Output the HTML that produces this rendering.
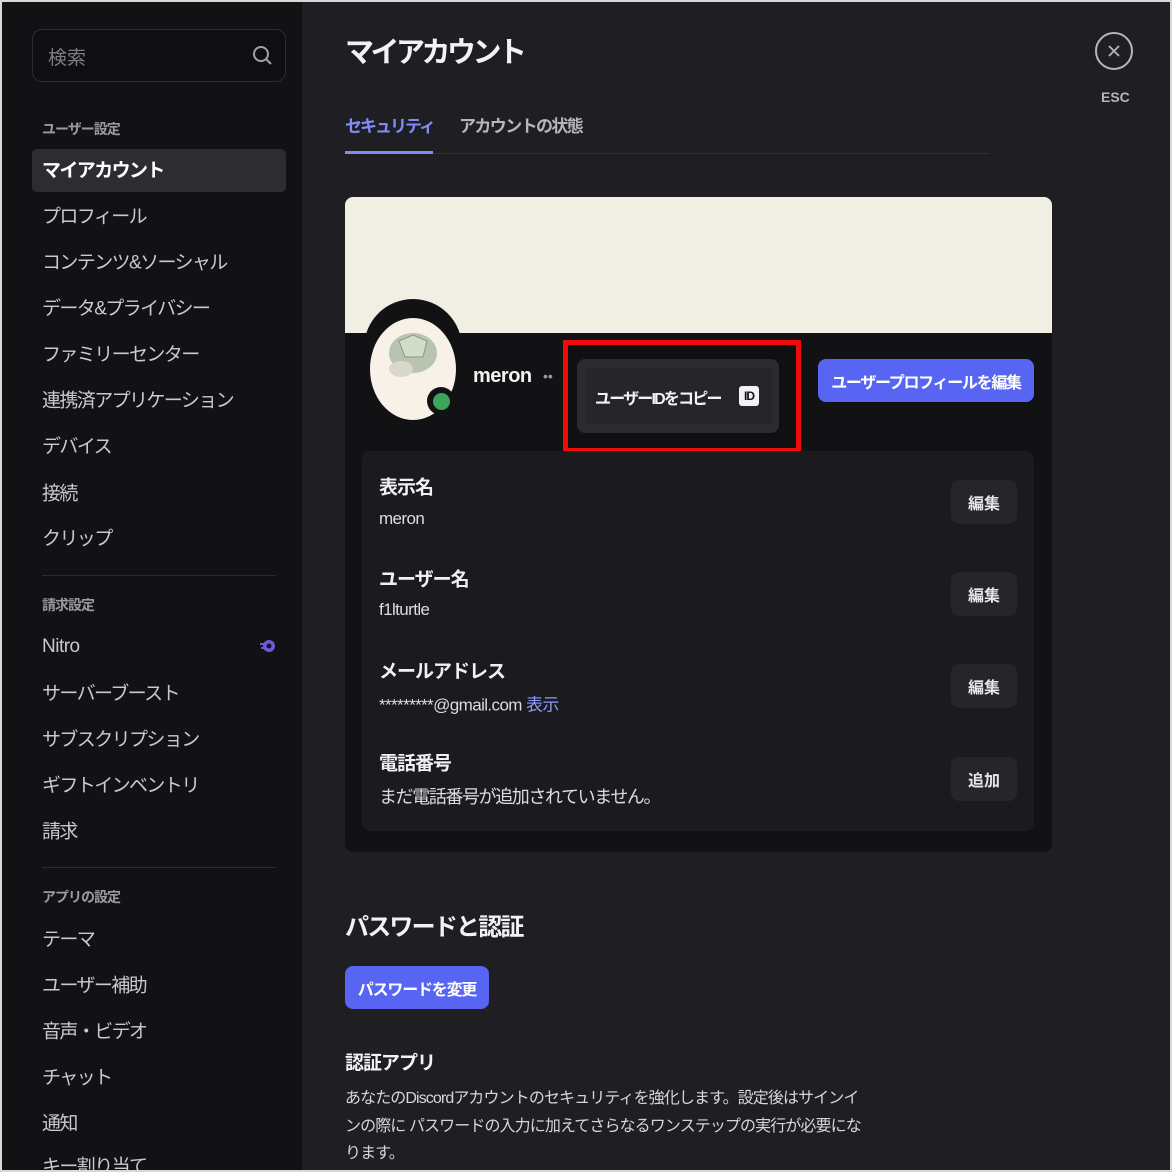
<!DOCTYPE html>
<html><head><meta charset="utf-8"><style>
*{margin:0;padding:0;box-sizing:border-box}
body{width:1172px;height:1172px;overflow:hidden;background:#d8d8d6;font-family:"Liberation Sans","Noto Sans CJK JP",sans-serif;position:relative}
.frame{position:absolute;left:2px;top:2px;width:1168px;height:1168px;background:#1f1f23;overflow:hidden}
.side{position:absolute;left:0;top:0;width:300px;height:1168px;background:#121214}
.abs{position:absolute;white-space:nowrap}
.si{position:absolute;left:40px;font-size:19px;color:#c9c9cf;transform:translateY(-50%);letter-spacing:-1.6px}
.hd{position:absolute;left:40px;font-size:14px;font-weight:bold;color:#9a9aa2;transform:translateY(-50%);letter-spacing:-1px}
.sep{position:absolute;left:40px;width:234px;height:1px;background:#2a2a30}
.lbl{position:absolute;left:377px;font-size:19px;font-weight:bold;color:#f0f0f2;transform:translateY(-50%);letter-spacing:-1px}
.val{position:absolute;left:377px;font-size:17px;color:#dcdce0;transform:translateY(-50%);letter-spacing:-0.6px}
.eb{position:absolute;left:949px;width:66px;height:44px;background:#25252a;border-radius:8px;color:#e6e6ea;font-size:16px;font-weight:bold;display:flex;align-items:center;justify-content:center}
</style></head><body><div class="frame">
<div class="side">
 <div class="abs" style="left:30px;top:27px;width:254px;height:53px;border:1px solid #2c2c32;border-radius:10px;background:#0f0f11"></div>
 <div class="abs" style="left:46px;top:41px;font-size:19px;color:#7c7c84">検索</div>
 <svg class="abs" style="left:250px;top:43px" width="22" height="22" viewBox="0 0 22 22"><circle cx="9" cy="9" r="7" fill="none" stroke="#a0a0a8" stroke-width="2"/><line x1="14" y1="14" x2="19" y2="19" stroke="#a0a0a8" stroke-width="2"/></svg>
 <div class="hd" style="top:127px">ユーザー設定</div>
 <div class="abs" style="left:30px;top:147px;width:254px;height:43px;background:#2c2c31;border-radius:5px"></div>
 <div class="si" style="top:167px;color:#fff;font-weight:bold">マイアカウント</div>
 <div class="si" style="top:213px">プロフィール</div>
 <div class="si" style="top:259px">コンテンツ&amp;ソーシャル</div>
 <div class="si" style="top:305px">データ&amp;プライバシー</div>
 <div class="si" style="top:351px">ファミリーセンター</div>
 <div class="si" style="top:397px">連携済アプリケーション</div>
 <div class="si" style="top:443px">デバイス</div>
 <div class="si" style="top:490px">接続</div>
 <div class="si" style="top:535px">クリップ</div>
 <div class="sep" style="top:573px"></div>
 <div class="hd" style="top:603px">請求設定</div>
 <div class="si" style="top:645px;letter-spacing:-0.5px">Nitro</div>
 <svg class="abs" style="left:257px;top:636px" width="18" height="16" viewBox="0 0 18 16"><circle cx="10" cy="8" r="6" fill="#6a5cd8"/><circle cx="10" cy="8" r="2.5" fill="#1a1030"/><rect x="1" y="5" width="4" height="2" fill="#6a5cd8"/><rect x="2" y="9" width="3" height="2" fill="#6a5cd8"/></svg>
 <div class="si" style="top:690px">サーバーブースト</div>
 <div class="si" style="top:736px">サブスクリプション</div>
 <div class="si" style="top:782px">ギフトインベントリ</div>
 <div class="si" style="top:828px">請求</div>
 <div class="sep" style="top:865px"></div>
 <div class="hd" style="top:895px">アプリの設定</div>
 <div class="si" style="top:936px">テーマ</div>
 <div class="si" style="top:982px">ユーザー補助</div>
 <div class="si" style="top:1028px">音声・ビデオ</div>
 <div class="si" style="top:1074px">チャット</div>
 <div class="si" style="top:1120px">通知</div>
 <div class="si" style="top:1163px">キー割り当て</div>
</div>
<div class="abs" style="left:343px;top:27px;font-size:29px;font-weight:bold;color:#f2f2f4;letter-spacing:-3.5px">マイアカウント</div>
<div class="abs" style="left:343px;top:110px;font-size:17px;font-weight:bold;color:#7f8cf5;letter-spacing:-2px">セキュリティ</div>
<div class="abs" style="left:457px;top:110px;font-size:17px;font-weight:bold;color:#b5b5bc;letter-spacing:-1.6px">アカウントの状態</div>
<div class="abs" style="left:343px;top:151px;width:645px;height:1px;background:#2e2e34"></div>
<div class="abs" style="left:343px;top:149px;width:88px;height:3px;background:#7f8cf5"></div>
<svg class="abs" style="left:1092px;top:29px" width="40" height="40" viewBox="0 0 40 40"><circle cx="20" cy="20" r="18" fill="none" stroke="#b5b5bc" stroke-width="2"/><path d="M15 15 L25 25 M25 15 L15 25" stroke="#b5b5bc" stroke-width="1.8"/></svg>
<div class="abs" style="left:1099px;top:87px;font-size:14px;font-weight:bold;color:#b5b5bc">ESC</div>

<div class="abs" style="left:343px;top:195px;width:707px;height:655px;background:#121214;border-radius:8px;overflow:hidden">
 <div style="height:136px;background:#f1eee3"></div>
</div>
<div class="abs" style="left:362px;top:297px;width:98px;height:126px;border-radius:49px;background:#121214"></div>
<div class="abs" style="left:368px;top:316px;width:86px;height:102px;border-radius:50%;background:#f7f1e8"></div>
<svg class="abs" style="left:375px;top:325px" width="70" height="60" viewBox="0 0 70 60"><ellipse cx="36" cy="26" rx="24" ry="20" fill="#b8c4b0"/><path d="M22 14 L36 8 L50 14 L46 30 L28 30Z" fill="#d3dccb" stroke="#8a9684"/><ellipse cx="24" cy="42" rx="12" ry="8" fill="#d8d8cc"/></svg>
<div class="abs" style="left:425px;top:385px;width:28px;height:28px;border-radius:50%;background:#121214"></div>
<div class="abs" style="left:431px;top:391px;width:17px;height:17px;border-radius:50%;background:#3ba55c"></div>
<div class="abs" style="left:471px;top:363px;font-size:20px;font-weight:bold;color:#f2f2f4;letter-spacing:-0.5px">meron</div>
<div class="abs" style="left:541px;top:366px;font-size:14px;color:#9a9aa2">••</div>
<div class="abs" style="left:561px;top:338px;width:238px;height:113px;border:5px solid #f00a0a;background:#101012"></div>
<div class="abs" style="left:575px;top:357px;width:202px;height:74px;border-radius:8px;background:#2a2a2f"></div>
<div class="abs" style="left:584px;top:366px;width:186px;height:56px;background:#25252a"></div>
<div class="abs" style="left:593px;top:383px;font-size:16px;font-weight:bold;color:#f2f2f4;letter-spacing:-1.8px">ユーザーIDをコピー</div>
<div class="abs" style="left:737px;top:384px;width:20px;height:20px;border-radius:3px;background:#f2f2f4;color:#111;font-size:12px;font-weight:bold;display:flex;align-items:center;justify-content:center;letter-spacing:-1px">ID</div>
<div class="abs" style="left:816px;top:357px;width:216px;height:43px;border-radius:8px;background:#5865f2;color:#fff;font-size:16px;font-weight:bold;display:flex;align-items:center;justify-content:center;letter-spacing:-1.3px">ユーザープロフィールを編集</div>
<div class="abs" style="left:360px;top:449px;width:672px;height:380px;border-radius:8px;background:#1b1b1f"></div>
<div class="lbl" style="top:484px">表示名</div><div class="val" style="top:517px">meron</div>
<div class="lbl" style="top:576px">ユーザー名</div><div class="val" style="top:608px">f1lturtle</div>
<div class="lbl" style="top:668px">メールアドレス</div><div class="val" style="top:701px">*********@gmail.com <span style="color:#8d98f8">表示</span></div>
<div class="lbl" style="top:760px">電話番号</div><div class="val" style="top:794px;font-size:18px;letter-spacing:-1.4px">まだ電話番号が追加されていません。</div>
<div class="eb" style="top:478px">編集</div>
<div class="eb" style="top:570px">編集</div>
<div class="eb" style="top:662px">編集</div>
<div class="eb" style="top:755px">追加</div>
<div class="abs" style="left:343px;top:905px;font-size:24px;font-weight:bold;color:#f2f2f4;letter-spacing:-1.8px">パスワードと認証</div>
<div class="abs" style="left:343px;top:964px;width:144px;height:43px;border-radius:8px;background:#5865f2;color:#fff;font-size:16px;font-weight:bold;display:flex;align-items:center;justify-content:center;letter-spacing:-1.2px">パスワードを変更</div>
<div class="abs" style="left:343px;top:1046px;font-size:19px;font-weight:bold;color:#f2f2f4;letter-spacing:-1px">認証アプリ</div>
<div class="abs" style="left:343px;top:1083px;width:520px;font-size:16px;line-height:27.5px;color:#d6d6da;white-space:normal;letter-spacing:-0.9px">あなたのDiscordアカウントのセキュリティを強化します。設定後はサインインの際に パスワードの入力に加えてさらなるワンステップの実行が必要になります。</div>
</div></body></html>
